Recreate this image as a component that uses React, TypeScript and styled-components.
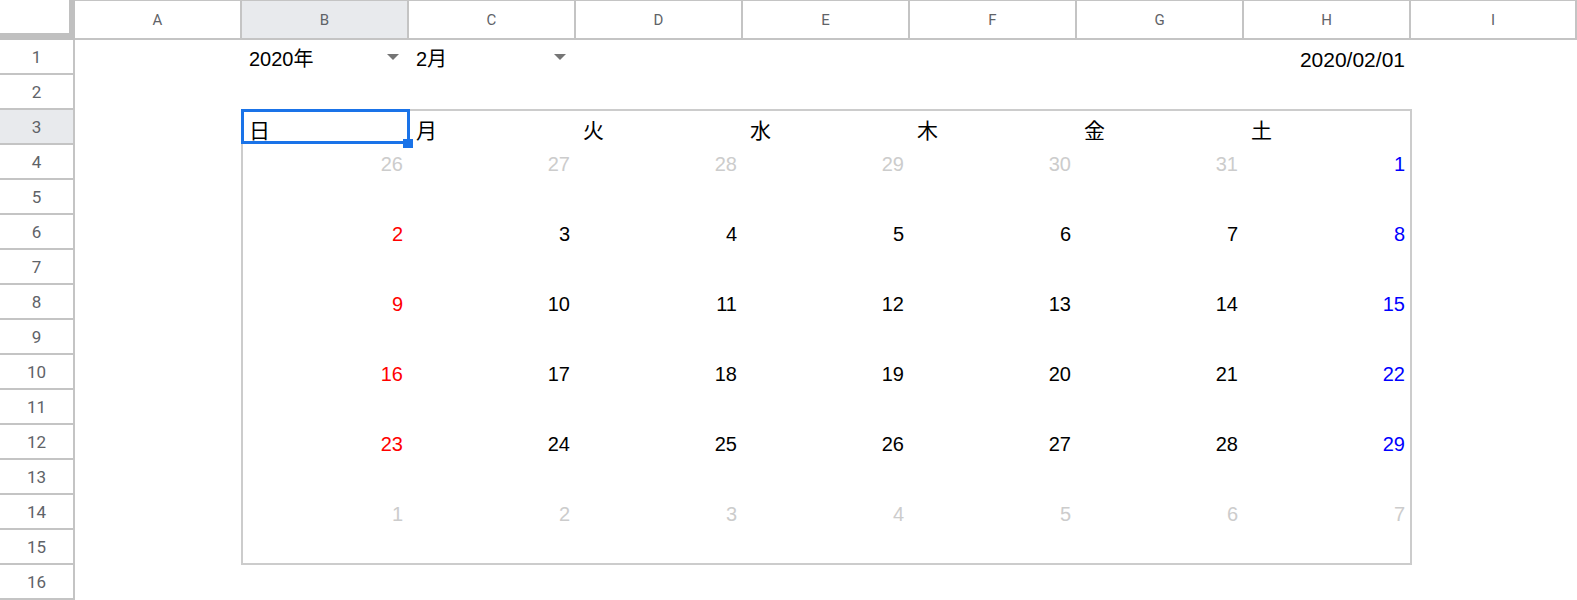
import styled, { createGlobalStyle } from "styled-components";

const GlobalStyle = createGlobalStyle`
  html, body {
    margin: 0;
    padding: 0;
    background: #ffffff;
    overflow: hidden;
  }
  * {
    box-sizing: border-box;
  }
`;

const COLUMNS = ["A", "B", "C", "D", "E", "F", "G", "H", "I"];
const ROW_COUNT = 16;
const WEEKDAYS = ["日", "月", "火", "水", "木", "金", "土"];

type Tone = "muted" | "sun" | "sat" | "plain";

interface IDay {
  day: number;
  tone: Tone;
}

const toneColor: Record<Tone, string> = {
  muted: "#cccccc",
  sun: "#ff0000",
  sat: "#0000ff",
  plain: "#000000",
};

// февраль 2020: начинается с субботы
const buildWeeks = (): IDay[][] => {
  const cells: IDay[] = [];
  for (let d = 26; d <= 31; d++) cells.push({ day: d, tone: "muted" });
  for (let d = 1; d <= 29; d++) cells.push({ day: d, tone: "plain" });
  for (let d = 1; cells.length < 42; d++) cells.push({ day: d, tone: "muted" });
  const weeks: IDay[][] = [];
  for (let w = 0; w < 6; w++) {
    weeks.push(
      cells.slice(w * 7, w * 7 + 7).map((c, i) => {
        if (c.tone === "muted") return c;
        if (i === 0) return { ...c, tone: "sun" };
        if (i === 6) return { ...c, tone: "sat" };
        return c;
      })
    );
  }
  return weeks;
};

const Sheet = styled.div`
  display: grid;
  grid-template-columns: 75px repeat(8, 167px) 166px;
  grid-template-rows: 40px repeat(${ROW_COUNT}, 35px);
  width: 1577px;
  height: 600px;
  overflow: hidden;
  font-family: "Liberation Sans", Arial, "Noto Sans CJK JP", sans-serif;
`;

const Corner = styled.div`
  grid-column: 1;
  grid-row: 1;
  background: #ffffff;
  border-right: 6px solid #c0c0c0;
  border-bottom: 7px solid #c0c0c0;
`;

const ColHeader = styled.div<{ $col: number; $active: boolean }>`
  grid-column: ${(p) => p.$col + 2};
  grid-row: 1;
  display: flex;
  align-items: center;
  justify-content: center;
  background: ${(p) => (p.$active ? "#e8eaed" : "#ffffff")};
  border-top: 1px solid #c4c4c4;
  border-right: 2px solid #c4c4c4;
  border-bottom: 2px solid #c4c4c4;
  font-family: Roboto, "Liberation Sans", sans-serif;
  font-size: 15px;
  color: #5f6368;
`;

const RowHeader = styled.div<{ $row: number; $active: boolean }>`
  grid-column: 1;
  grid-row: ${(p) => p.$row + 1};
  display: flex;
  align-items: center;
  justify-content: center;
  background: ${(p) => (p.$active ? "#e8eaed" : "#ffffff")};
  border-right: 2px solid #c4c4c4;
  border-bottom: 2px solid #c4c4c4;
  font-family: Roboto, "Liberation Sans", sans-serif;
  font-size: 17px;
  color: #5f6368;
`;

const Cell = styled.div<{
  $col: number;
  $row: number;
  $align?: "left" | "right";
  $color?: string;
}>`
  grid-column: ${(p) => p.$col + 2};
  grid-row: ${(p) => p.$row + 1};
  display: flex;
  align-items: flex-end;
  justify-content: ${(p) => (p.$align === "right" ? "flex-end" : "flex-start")};
  padding: 0 6px 4px 7px;
  font-size: 20px;
  line-height: 23px;
  color: ${(p) => p.$color || "#000000"};
  white-space: nowrap;
`;

const DateText = styled.span`
  font-size: 21px;
`;

const WeekdayText = styled.span`
  font-family: "Noto Sans CJK JP", "Liberation Sans", sans-serif;
  font-size: 21px;
  line-height: 23px;
`;

const Caret = styled.span`
  margin-left: auto;
  margin-right: 4px;
  align-self: center;
  margin-top: 2px;
  width: 0;
  height: 0;
  border-left: 6px solid transparent;
  border-right: 6px solid transparent;
  border-top: 6px solid #757575;
`;

// рамка календаря
const Frame = styled.div`
  grid-column: 3 / 10;
  grid-row: 4 / 17;
  border: 2px solid #cccccc;
  margin: -1px -1px 0 -1px;
  pointer-events: none;
`;

const Selection = styled.div`
  grid-column: 3;
  grid-row: 4;
  position: relative;
  margin: -1px -1px 1px -1px;
  border: 3px solid #1a73e8;
  pointer-events: none;
`;

const FillHandle = styled.span`
  position: absolute;
  right: -6px;
  bottom: -7px;
  width: 10px;
  height: 9px;
  background: #1a73e8;
`;

export default function App() {
  const weeks = buildWeeks();
  return (
    <>
      <GlobalStyle />
      <Sheet>
        <Corner />
        {COLUMNS.map((c, i) => (
          <ColHeader key={c} $col={i} $active={c === "B"}>
            {c}
          </ColHeader>
        ))}
        {Array.from({ length: ROW_COUNT }, (_, i) => (
          <RowHeader key={i} $row={i + 1} $active={i + 1 === 3}>
            {i + 1}
          </RowHeader>
        ))}

        <Cell $col={1} $row={1}>
          2020年
          <Caret />
        </Cell>
        <Cell $col={2} $row={1}>
          2月
          <Caret />
        </Cell>
        <Cell $col={7} $row={1} $align="right">
          <DateText>2020/02/01</DateText>
        </Cell>

        {WEEKDAYS.map((w, i) => (
          <Cell key={w} $col={i + 1} $row={3}>
            <WeekdayText>{w}</WeekdayText>
          </Cell>
        ))}

        {weeks.map((week, wi) =>
          week.map((d, di) => (
            <Cell
              key={`${wi}-${di}`}
              $col={di + 1}
              $row={4 + wi * 2}
              $align="right"
              $color={toneColor[d.tone]}
            >
              {d.day}
            </Cell>
          ))
        )}

        <Frame />
        <Selection>
          <FillHandle />
        </Selection>
      </Sheet>
    </>
  );
}
